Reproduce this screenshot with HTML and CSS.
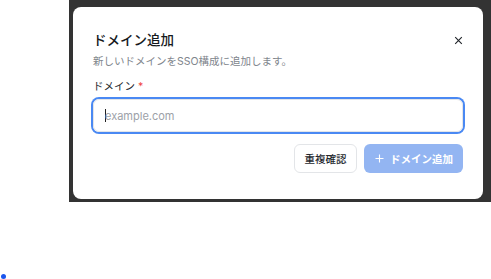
FILE: index.html
```html
<!DOCTYPE html>
<html lang="ja">
<head>
    <meta charset="UTF-8">
    <title>ドメイン追加</title>
    <link rel="stylesheet" href="styles.css">
</head>
<body>

    <div class="stage">
        <div class="dialog">
            <div class="dialog-head">
                <h2 class="dialog-title">ドメイン追加</h2>
                <button class="dialog-close" type="button" aria-label="閉じる">
                    <svg width="9" height="9" viewBox="0 0 9 9"><path d="M1.2 1.2 L7.8 7.8 M7.8 1.2 L1.2 7.8" stroke="#1f2328" stroke-width="1.1" fill="none"/></svg>
                </button>
            </div>
            <p class="dialog-desc">新しいドメインをSSO構成に追加します。</p>

            <label class="field-label" for="domain">ドメイン <span class="req">*</span></label>
            <div class="field-input">
                <span class="caret"></span>
                <input id="domain" type="text" placeholder="example.com">
            </div>

            <div class="dialog-foot">
                <button class="btn btn-outline" type="button">重複確認</button>
                <button class="btn btn-primary" type="button" disabled>
                    <svg width="9" height="9" viewBox="0 0 9 9"><path d="M4.5 0.5 V8.5 M0.5 4.5 H8.5" stroke="#fff" stroke-width="1.1" fill="none"/></svg>
                    ドメイン追加
                </button>
            </div>
        </div>
    </div>

    <ul class="dots">
        <li></li>
    </ul>

</body>
</html>
```

FILE: styles.css
```css
*{
    margin:0;
    padding:0;
    box-sizing: border-box;
}

body{
    background: #fff;
    font-family: "Inter", "Noto Sans CJK JP", sans-serif;
    color: #1f2328;
}

.stage{
    width: 422px;
    height: 202px;
    margin-left: 69px;
    padding: 7px 8px 0 4px;
    background: #333333;
}

.dialog{
    width: 410px;
    padding: 24px 20px 26px;
    background: #fff;
    border-radius: 8px;
}

.dialog-head{
    display: flex;
    justify-content: space-between;
    align-items: center;
}

.dialog-title{
    font-size: 13.5px;
    line-height: 18px;
    font-weight: 500;
    color: #16191d;
}

.dialog-close{
    display: flex;
    width: 9px;
    height: 9px;
    border: 0;
    background: none;
}

.dialog-desc{
    margin-top: 5px;
    font-size: 10.5px;
    line-height: 15px;
    color: #80858c;
}

.field-label{
    display: block;
    margin-top: 10px;
    font-size: 10.5px;
    line-height: 15px;
    font-weight: 400;
    color: #23272d;
}

.field-label .req{
    color: #ef4444;
}

.field-input{
    display: flex;
    align-items: center;
    height: 33px;
    margin-top: 5px;
    padding-left: 11px;
    border: 1px solid #e3e5e8;
    border-radius: 6px;
    box-shadow: 0 0 0 2px #4a89f3;
}

.field-input .caret{
    width: 1px;
    height: 13px;
    margin-right: -1px;
    background: #222;
}

.field-input input{
    flex: 1;
    border: 0;
    outline: 0;
    background: none;
    font-family: inherit;
    font-size: 11px;
    color: #1f2328;
}

.field-input input::placeholder{
    color: #9ca1a8;
}

.dialog-foot{
    display: flex;
    justify-content: flex-end;
    gap: 7px;
    margin-top: 12px;
}

.btn{
    display: flex;
    align-items: center;
    gap: 6px;
    height: 29px;
    padding: 0;
    border-radius: 6px;
    font-family: inherit;
    font-size: 10.5px;
    font-weight: 500;
    white-space: nowrap;
}

.btn-outline{
    width: 63px;
    justify-content: center;
    border: 1px solid #e3e5e8;
    background: #fff;
    color: #23272d;
}

.btn-primary{
    width: 99px;
    padding-left: 11px;
    border: 0;
    background: #93b5f2;
    color: #fff;
    font-weight: 600;
}

.dots{
    margin-top: 72px;
    list-style: none;
}

.dots li{
    width: 5px;
    height: 5px;
    margin-left: 1px;
    border-radius: 50%;
    background: #1a55ee;
}
```
